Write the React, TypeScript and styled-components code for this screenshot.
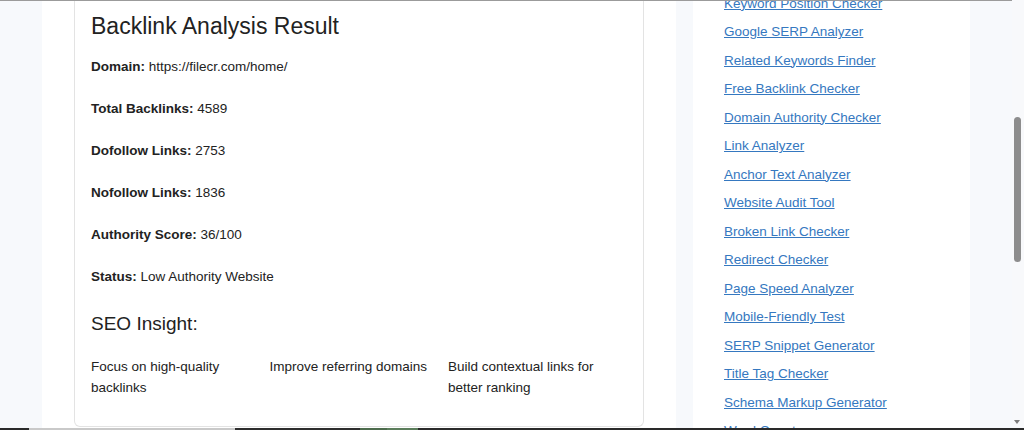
import styled, { createGlobalStyle } from "styled-components";

const GlobalStyle = createGlobalStyle`
  html, body {
    margin: 0;
    padding: 0;
  }
  body {
    font-family: "Liberation Sans", Arial, sans-serif;
    background: #f7f9fc;
    overflow: hidden;
  }
`;

const Screen = styled.div`
  width: 1024px;
  height: 430px;
  display: flex;
  flex-direction: column;
  overflow: hidden;
`;

const Window = styled.div`
  display: flex;
  height: 428px;
`;

const Viewport = styled.div`
  flex: 1;
  min-width: 0;
  display: flex;
  flex-direction: column;
`;

const TopLine = styled.div`
  height: 1px;
  flex-shrink: 0;
  background: #9b9b9b;
`;

const Page = styled.div`
  flex: 1;
  display: flex;
  align-items: flex-start;
  padding-left: 42px;
  background: #f7f9fc;
  overflow: hidden;
`;

const MainColumn = styled.main`
  width: 634px;
  align-self: stretch;
  box-sizing: border-box;
  padding: 0 32px;
  background: #fff;
`;

const Card = styled.section`
  border: 1px solid #e3e3e3;
  border-top: none;
  border-radius: 0 0 6px 6px;
  padding: 11px 16px 28px;
  color: #222;
`;

const Title = styled.h2<{ size: number; gap: number }>`
  margin: 0 0 ${(p) => p.gap}px;
  font-size: ${(p) => p.size}px;
  line-height: ${(p) => p.size + 5}px;
  font-weight: 400;
  color: #222;
`;

const Facts = styled.div`
  display: flex;
  flex-direction: column;
  gap: 20px;
  margin-bottom: 24px;
`;

const Fact = styled.p`
  margin: 0;
  font-size: 13.5px;
  line-height: 22px;
`;

const Insights = styled.div`
  display: grid;
  grid-template-columns: repeat(3, 164px);
  column-gap: 14.5px;
`;

const Insight = styled.p`
  margin: 0;
  font-size: 13.5px;
  line-height: 21px;
`;

const Sidebar = styled.aside`
  width: 277px;
  align-self: stretch;
  margin-left: 17px;
  box-sizing: border-box;
  padding-left: 31px;
  background: #fff;
`;

const ToolList = styled.ul`
  list-style: none;
  margin: -11.5px 0 0;
  padding: 0;
`;

const ToolItem = styled.li`
  font-size: 13.5px;
  line-height: 28.5px;
`;

const ToolLink = styled.a`
  color: #3578c0;
  text-decoration: underline;
`;

const Scrollbar = styled.div`
  width: 12px;
  display: flex;
  flex-direction: column;
  background: #f8f9fb;
`;

const Thumb = styled.div`
  width: 7px;
  height: 145px;
  margin: 117px 0 0 2px;
  border-radius: 4px;
  background: #8d8d8d;
`;

const DownArrow = styled.div`
  width: 0;
  height: 0;
  margin: auto 0 4px 2px;
  border-left: 3.5px solid transparent;
  border-right: 3.5px solid transparent;
  border-top: 4px solid #7c7c7c;
`;

const BottomStrip = styled.div`
  height: 2px;
  display: flex;
  background: #2a2a2a;
`;

const Segment = styled.div<{ w: number; color: string }>`
  width: ${(p) => p.w}px;
  background: ${(p) => p.color};
`;

const facts = [
  ["Domain:", "https://filecr.com/home/"],
  ["Total Backlinks:", "4589"],
  ["Dofollow Links:", "2753"],
  ["Nofollow Links:", "1836"],
  ["Authority Score:", "36/100"],
  ["Status:", "Low Authority Website"],
];

const insights = [
  "Focus on high-quality backlinks",
  "Improve referring domains",
  "Build contextual links for better ranking",
];

const tools = [
  "Keyword Position Checker",
  "Google SERP Analyzer",
  "Related Keywords Finder",
  "Free Backlink Checker",
  "Domain Authority Checker",
  "Link Analyzer",
  "Anchor Text Analyzer",
  "Website Audit Tool",
  "Broken Link Checker",
  "Redirect Checker",
  "Page Speed Analyzer",
  "Mobile-Friendly Test",
  "SERP Snippet Generator",
  "Title Tag Checker",
  "Schema Markup Generator",
  "Word Counter",
];

const App = () => {
  return (
    <>
      <GlobalStyle />
      <Screen>
        <Window>
          <Viewport>
            <TopLine />
            <Page>
              <MainColumn>
                <Card>
                  <Title size={23} gap={16}>
                    Backlink Analysis Result
                  </Title>
                  <Facts>
                    {facts.map(([label, value]) => (
                      <Fact key={label}>
                        <strong>{label}</strong> {value}
                      </Fact>
                    ))}
                  </Facts>
                  <Title size={19} gap={20}>
                    SEO Insight:
                  </Title>
                  <Insights>
                    {insights.map((text) => (
                      <Insight key={text}>{text}</Insight>
                    ))}
                  </Insights>
                </Card>
              </MainColumn>
              <Sidebar>
                <ToolList>
                  {tools.map((tool) => (
                    <ToolItem key={tool}>
                      <ToolLink href="#">{tool}</ToolLink>
                    </ToolItem>
                  ))}
                </ToolList>
              </Sidebar>
            </Page>
          </Viewport>
          <Scrollbar>
            <Thumb />
            <DownArrow />
          </Scrollbar>
        </Window>
        <BottomStrip>
          <Segment w={29} color="#2a2a2a" />
          <Segment w={206} color="#c9c9c9" />
          <Segment w={125} color="#2d2d2d" />
          <Segment w={27} color="#4d6b4d" />
          <Segment w={31} color="#5b7d5b" />
        </BottomStrip>
      </Screen>
    </>
  );
};

export default App;
